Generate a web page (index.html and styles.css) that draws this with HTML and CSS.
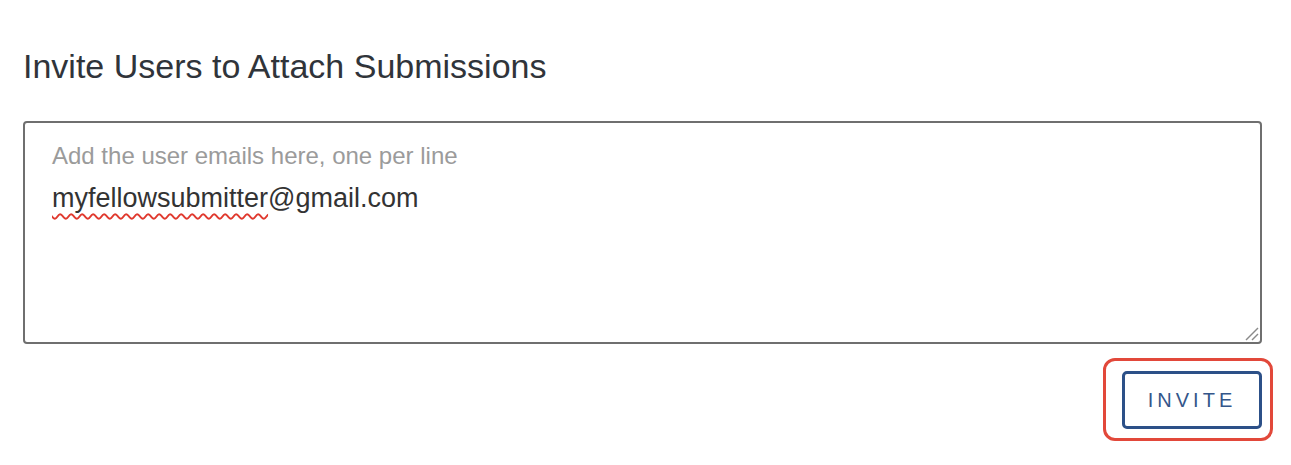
FILE: index.html
```html
<!DOCTYPE html>
<html lang="en">
<head>
    <meta charset="UTF-8">
    <meta name="viewport" content="width=device-width, initial-scale=1.0">
    <title>Invite Users</title>
    <link rel="stylesheet" href="styles.css">
</head>
<body>
    <div class="invite-panel">
        <!-- Title -->
        <h2 class="invite-title">Invite Users to Attach Submissions</h2>

        <!-- Email list box -->
        <div class="email-field">
            <label class="email-label">Add the user emails here, one per line</label>
            <div class="email-entry"><span class="misspelled">myfellowsubmitter</span>@gmail.com</div>
            <svg class="resize-grip" width="16" height="16" viewBox="0 0 16 16">
                <line x1="3" y1="15" x2="15" y2="3" stroke="#8a8a8a" stroke-width="1.4"/>
                <line x1="9" y1="15" x2="15" y2="9" stroke="#8a8a8a" stroke-width="1.4"/>
            </svg>
        </div>

        <!-- Invite button -->
        <div class="invite-actions">
            <div class="highlight">
                <button class="invite-button" id="inviteButton">INVITE</button>
            </div>
        </div>
    </div>
</body>
</html>
```

FILE: styles.css
```css
/* Base */
body {
    margin: 0;
    padding: 0;
    background-color: #ffffff;
    font-family: 'Liberation Sans', Arial, sans-serif;
}

/* Panel */
.invite-panel {
    width: 1239px;
    padding: 46px 0 36px 23px;
}

/* Title */
.invite-title {
    margin: 0 0 35px 0;
    font-size: 34px;
    line-height: 40px;
    font-weight: normal;
    color: #30343a;
}

/* Email box */
.email-field {
    position: relative;
    box-sizing: border-box;
    height: 223px;
    padding: 19px 27px 0 27px;
    border: 2px solid #6f6f6f;
    border-radius: 4px;
}

.email-label {
    display: block;
    font-size: 24px;
    line-height: 28px;
    color: #9b9b9b;
}

.email-entry {
    margin-top: 12px;
    font-size: 27px;
    line-height: 32px;
    color: #333333;
}

.misspelled {
    text-decoration: underline wavy #e0392e;
    text-decoration-thickness: 1.5px;
    text-underline-offset: 6px;
}

.resize-grip {
    position: absolute;
    right: 1px;
    bottom: 1px;
}

/* Actions */
.invite-actions {
    display: flex;
    justify-content: flex-end;
    margin-top: 27px;
}

.highlight {
    position: relative;
    display: flex;
}

/* Red highlight round the button */
.highlight::after {
    content: "";
    position: absolute;
    top: -13px;
    left: -19px;
    right: -11px;
    bottom: -12px;
    border: 3px solid #e2483a;
    border-radius: 12px;
    pointer-events: none;
}

.invite-button {
    height: 58px;
    width: 140px;
    padding: 0;
    background-color: #ffffff;
    border: 3px solid #2c5088;
    border-radius: 5px;
    font-family: 'Liberation Sans', Arial, sans-serif;
    font-size: 20px;
    letter-spacing: 4px;
    color: #34568a;
    cursor: pointer;
}
```
